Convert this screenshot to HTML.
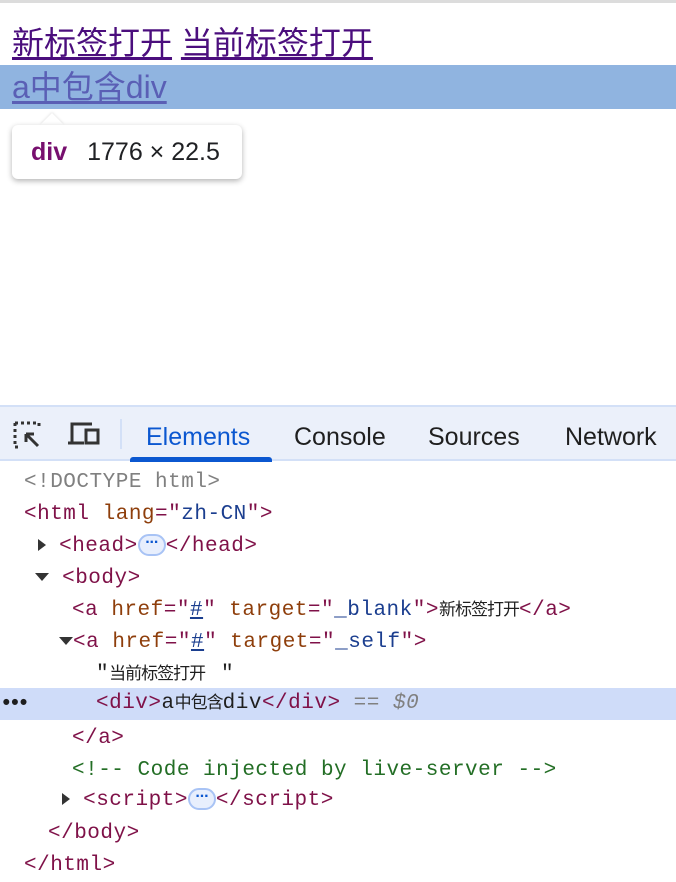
<!DOCTYPE html>
<html><head><meta charset="utf-8"><style>
*{margin:0;padding:0;box-sizing:border-box}
body{width:676px;height:882px;background:#fff;position:relative;overflow:hidden;font-family:"Liberation Sans","Noto Sans CJK SC",sans-serif}
.topline{position:absolute;left:0;top:0;width:676px;height:3px;background:#dcdcdc}
.links{position:absolute;left:12px;top:23px;font-size:32px;line-height:40px;color:#4b0e7d}
.links u{text-decoration:underline;text-underline-offset:3px}
.hl{position:absolute;left:0;top:65px;width:676px;height:44px;background:#90b4e0}
.divt{position:absolute;left:12px;top:67px;font-size:32px;line-height:40px;color:#5a5fb5;text-decoration:underline;text-underline-offset:3px}
.tip{position:absolute;left:12px;top:125px;width:230px;height:54px;background:#fff;border-radius:6px;box-shadow:0 2px 6px rgba(0,0,0,.3);font-size:25px;line-height:54px;padding-left:19px;color:#202124}
.tip b{color:#770f6e;margin-right:20px}
.arrow{position:absolute;left:40px;top:113px;width:0;height:0;border-left:12px solid transparent;border-right:12px solid transparent;border-bottom:12px solid #fff;filter:drop-shadow(0 -1px 1px rgba(0,0,0,.1))}
.bar{position:absolute;left:0;top:405px;width:676px;height:56px;background:#ebf0fa;border-top:2px solid #d3e0f7;border-bottom:2px solid #d3e0f7}
.tab{position:absolute;top:16px;font-size:25px;color:#1f1f1f}
.ul{position:absolute;left:130px;top:50px;width:142px;height:5px;background:#0b57d0;border-radius:3px 3px 0 0}
.sep{position:absolute;left:120px;top:12px;width:2px;height:30px;background:#d3e0f7}
.ln{position:absolute;left:0;width:676px;height:32px;font-family:"Liberation Mono","Noto Sans CJK SC",monospace;font-size:21px;line-height:32px;white-space:pre;color:#1f1f1f;letter-spacing:.5px}
.t{color:#7f1148}.an{color:#8e3e0b}.av{color:#1b3e8f}.cm{color:#236e25}.gr{color:#808080}
.c{font-family:"Noto Sans CJK SC",sans-serif;font-size:17px;letter-spacing:-1px;line-height:20px}
.sel{background:#cfdcf9}
.tri{display:inline-block;width:0;height:0;vertical-align:middle}
.tr{border-top:6px solid transparent;border-bottom:6px solid transparent;border-left:8px solid #333}
.td{border-left:7px solid transparent;border-right:7px solid transparent;border-top:8px solid #333}
.dots{display:inline-block;width:28px;height:22px;border:2px solid #a8c3f5;border-radius:11px;background:#e8effd;color:#0b57d0;font-family:"Liberation Sans",sans-serif;font-size:16px;line-height:14px;text-align:center;vertical-align:middle;font-weight:bold;letter-spacing:-1px}
</style></head><body>
<div class="topline"></div>
<div class="links"><u>新标签打开</u> <u>当前标签打开</u></div>
<div class="hl"></div>
<div class="divt">a中包含div</div>
<div class="arrow"></div>
<div class="tip"><b>div</b>1776 × 22.5</div>

<div class="bar">
<svg style="position:absolute;left:13px;top:14px" width="30" height="28" viewBox="0 0 30 28" fill="none" stroke="#333" stroke-width="3">
<path d="M2 2h24M2 2v24M26 2v6M2 26h6" stroke-dasharray="3 3"/>
<path d="M13 13l12 12M13 13h8M13 13v8"/>
</svg>
<svg style="position:absolute;left:68px;top:15px" width="34" height="26" viewBox="0 0 34 26" fill="none" stroke="#333" stroke-width="3">
<path d="M4 20V2h20M0 21h16"/>
<rect x="18" y="8" width="12" height="13"/>
</svg>
<div class="sep"></div>
<div class="tab" style="left:146px;color:#0b57d0">Elements</div>
<div class="tab" style="left:294px">Console</div>
<div class="tab" style="left:428px">Sources</div>
<div class="tab" style="left:565px">Network</div>
<div class="ul"></div>
</div>

<div class="ln" style="top:467px;padding-left:24px"><span class="gr">&lt;!DOCTYPE html&gt;</span></div>
<div class="ln" style="top:499px;padding-left:24px"><span class="t">&lt;html</span> <span class="an">lang</span><span class="t">="</span><span class="av">zh-CN</span><span class="t">"&gt;</span></div>
<div class="ln" style="top:531px;padding-left:38px"><span class="tri tr"></span><span class="t"> &lt;head&gt;</span><span class="dots">···</span><span class="t">&lt;/head&gt;</span></div>
<div class="ln" style="top:563px;padding-left:35px"><span class="tri td"></span><span class="t"> &lt;body&gt;</span></div>
<div class="ln" style="top:595px;padding-left:72px"><span class="t">&lt;a</span> <span class="an">href</span><span class="t">="</span><span class="av"><u>#</u></span><span class="t">"</span> <span class="an">target</span><span class="t">="</span><span class="av">_blank</span><span class="t">"&gt;</span><span class="c">新标签打开</span><span class="t">&lt;/a&gt;</span></div>
<div class="ln" style="top:627px;padding-left:59px"><span class="tri td"></span><span class="t">&lt;a</span> <span class="an">href</span><span class="t">="</span><span class="av"><u>#</u></span><span class="t">"</span> <span class="an">target</span><span class="t">="</span><span class="av">_self</span><span class="t">"&gt;</span></div>
<div class="ln" style="top:659px;padding-left:96px">"<span class="c">当前标签打开 </span> "</div>
<div class="ln sel" style="top:688px;height:32px"><span style="position:absolute;left:0;top:1px;font-weight:bold;letter-spacing:-4px">•••</span><span style="position:absolute;left:96px;top:0"><span class="t">&lt;div&gt;</span>a<span class="c">中包含</span>div<span class="t">&lt;/div&gt;</span><span class="gr"> == <i>$0</i></span></span></div>
<div class="ln" style="top:723px;padding-left:72px"><span class="t">&lt;/a&gt;</span></div>
<div class="ln" style="top:755px;padding-left:72px"><span class="cm">&lt;!-- Code injected by live-server --&gt;</span></div>
<div class="ln" style="top:785px;padding-left:62px"><span class="tri tr"></span><span class="t"> &lt;script&gt;</span><span class="dots">···</span><span class="t">&lt;/script&gt;</span></div>
<div class="ln" style="top:818px;padding-left:48px"><span class="t">&lt;/body&gt;</span></div>
<div class="ln" style="top:850px;padding-left:24px"><span class="t">&lt;/html&gt;</span></div>
</body></html>
